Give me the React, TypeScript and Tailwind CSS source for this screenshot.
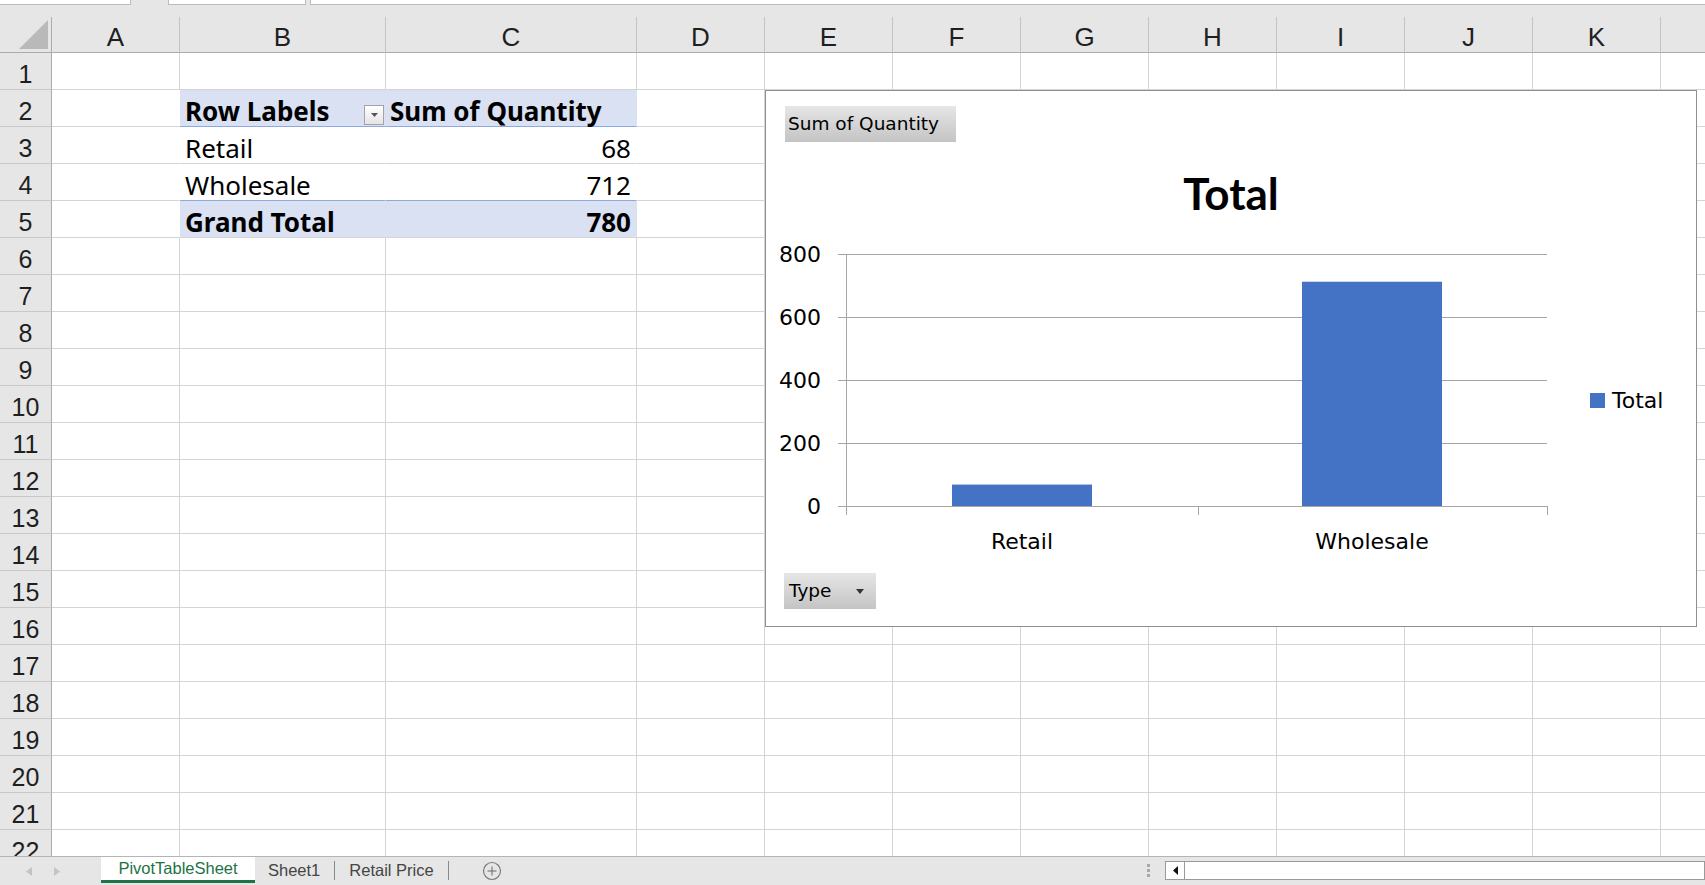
import React from 'react';

type Col = { l: string; w: string };
const COLS: Col[] = [
  { l: 'A', w: 'w-[128px]' },
  { l: 'B', w: 'w-[206px]' },
  { l: 'C', w: 'w-[251px]' },
  { l: 'D', w: 'w-[128px]' },
  { l: 'E', w: 'w-[128px]' },
  { l: 'F', w: 'w-[128px]' },
  { l: 'G', w: 'w-[128px]' },
  { l: 'H', w: 'w-[128px]' },
  { l: 'I', w: 'w-[128px]' },
  { l: 'J', w: 'w-[128px]' },
  { l: 'K', w: 'w-[128px]' },
  { l: '', w: 'w-[128px]' },
];

const ROWS = Array.from({ length: 22 }, (_, i) => i + 1);

function TopStrip() {
  return (
    <div className="h-[17px] shrink-0 bg-[#e6e6e6] flex items-start">
      <div className="w-[131px] h-[5px] bg-white border-r border-b border-[#bdbdbd]" />
      <div className="w-[37px]" />
      <div className="w-[138px] h-[5px] bg-white border-l border-r border-b border-[#bdbdbd]" />
      <div className="w-[4px]" />
      <div className="flex-1 h-[5px] bg-white border-l border-b border-[#bdbdbd]" />
    </div>
  );
}

function HeaderRow() {
  return (
    <div className="flex h-[36px] shrink-0 bg-[#e6e6e6]">
      <div className="w-[52px] shrink-0 border-r border-b border-r-[#ababab] border-b-[#ababab] flex items-end justify-end pr-[2px] pb-[2px]">
        <svg width="30" height="30" viewBox="0 0 30 30" className="block">
          <polygon points="29,0 29,29 0,29" fill="#b9b9b9" />
        </svg>
      </div>
      {COLS.map((c, i) => (
        <div
          key={i}
          className={`${c.w} shrink-0 border-r border-b border-r-[#c4c4c4] border-b-[#ababab] flex items-end justify-center leading-[29px] text-[26px] text-[#1f1f1f] overflow-hidden`}
        >
          {c.l}
        </div>
      ))}
    </div>
  );
}

function Dropdown() {
  return (
    <div className="w-[20px] h-[20px] mr-[1px] mb-[1px] border border-[#a3a3a3] bg-linear-to-b from-white to-[#e4e4e4] flex items-center justify-center self-end">
      <svg width="7" height="4" viewBox="0 0 7 4" className="block">
        <polygon points="0,0 7,0 3.5,4" fill="#555" />
      </svg>
    </div>
  );
}

function DataCell({ row, col, w }: { row: number; col: number; w: string }) {
  const inPivot = row >= 2 && row <= 5 && col <= 2;
  const blue = (row === 2 || row === 5) && (col === 1 || col === 2);
  let right = 'border-r-[#d4d4d4]';
  if (inPivot) right = blue ? 'border-r-[#d9e1f2]' : 'border-r-white';
  let bottom = 'border-b-[#d4d4d4]';
  if ((row === 2 || row === 4) && (col === 1 || col === 2)) bottom = 'border-b-[#8ea9db]';
  const bg = blue ? 'bg-[#d9e1f2]' : 'bg-white';

  let content: React.ReactNode = null;
  let align = 'justify-start';
  if (inPivot && col === 1) {
    if (row === 2) {
      align = 'justify-between';
      content = (
        <>
          <span className="pl-[5px] font-bold">Row Labels</span>
          <Dropdown />
        </>
      );
    } else if (row === 3) content = <span className="pl-[5px]">Retail</span>;
    else if (row === 4) content = <span className="pl-[5px]">Wholesale</span>;
    else content = <span className="pl-[5px] font-bold">Grand Total</span>;
  } else if (inPivot && col === 2) {
    if (row === 2) content = <span className="pl-[4px] font-bold">Sum of Quantity</span>;
    else {
      align = 'justify-end';
      const v = row === 3 ? '68' : row === 4 ? '712' : '780';
      content = <span className={`pr-[5px] ${row === 5 ? 'font-bold' : ''}`}>{v}</span>;
    }
  }

  return (
    <div
      className={`${w} shrink-0 h-[37px] border-r border-b ${right} ${bottom} ${bg} flex items-end ${align} leading-[29px] text-[26px] text-black whitespace-nowrap font-['Noto_Sans',sans-serif]`}
    >
      {content}
    </div>
  );
}

function SheetRow({ n }: { n: number }) {
  return (
    <div className="flex h-[37px] shrink-0">
      <div className="w-[52px] shrink-0 bg-[#e6e6e6] border-r border-b border-r-[#ababab] border-b-[#c8c8c8] flex items-end justify-center leading-[29px] text-[25px] text-[#1f1f1f]">
        {n}
      </div>
      {COLS.map((c, i) => (
        <DataCell key={i} row={n} col={i} w={c.w} />
      ))}
    </div>
  );
}

function Chart() {
  const zeroY = 287;
  const topY = 35;
  const yOf = (v: number) => zeroY - (v / 800) * (zeroY - topY);
  const ticks = [0, 200, 400, 600, 800];
  const grid = '#a6a6a6';
  const font = 'DejaVu Sans, sans-serif';
  return (
    <div className="absolute left-[765px] top-[37px] w-[932px] h-[537px] border border-[#8f8f8f] bg-white flex flex-col font-['DejaVu_Sans',sans-serif] text-black">
      <div className="pl-[19px] pt-[15px]">
        <div className="h-[36px] w-[171px] bg-linear-to-b from-[#e6e6e6] to-[#c4c4c4] pl-[3px] leading-[36px] text-[18.5px] whitespace-nowrap">
          Sum of Quantity
        </div>
      </div>
      <div className="mt-[26px] h-[51px] text-center leading-[51px] text-[44px] font-bold font-['Lato',sans-serif]">
        Total
      </div>
      <svg width={930} height={354} viewBox="0 0 930 354" className="block shrink-0">
        {ticks.map((t) => (
          <line key={t} x1={72} x2={781} y1={yOf(t) + 0.5} y2={yOf(t) + 0.5} stroke={grid} strokeWidth={1} />
        ))}
        <line x1={80.5} x2={80.5} y1={35} y2={296} stroke={grid} strokeWidth={1} />
        <line x1={432.5} x2={432.5} y1={287} y2={296} stroke={grid} strokeWidth={1} />
        <line x1={781.5} x2={781.5} y1={287} y2={296} stroke={grid} strokeWidth={1} />
        <rect x={186} y={yOf(68)} width={140} height={zeroY - yOf(68)} fill="#4472c4" />
        <rect x={536} y={yOf(712)} width={140} height={zeroY - yOf(712)} fill="#4472c4" />
        {ticks.map((t) => (
          <text key={t} x={55} y={yOf(t) + 8} textAnchor="end" fontFamily={font} fontSize={22} fill="#000">
            {t}
          </text>
        ))}
        <text x={256} y={330} textAnchor="middle" fontFamily={font} fontSize={22} fill="#000">
          Retail
        </text>
        <text x={606} y={330} textAnchor="middle" fontFamily={font} fontSize={22} fill="#000">
          Wholesale
        </text>
        <rect x={824} y={174} width={15} height={15} fill="#4472c4" />
        <text x={846} y={189} fontFamily={font} fontSize={22} fill="#000">
          Total
        </text>
      </svg>
      <div className="pl-[18px]">
        <div className="h-[36px] w-[92px] bg-linear-to-b from-[#e6e6e6] to-[#c4c4c4] flex items-center justify-between pl-[5px] pr-[12px] text-[18.5px]">
          <span>Type</span>
          <svg width="8" height="5" viewBox="0 0 8 5" className="block">
            <polygon points="0,0 8,0 4,5" fill="#333" />
          </svg>
        </div>
      </div>
    </div>
  );
}

function TabBar() {
  return (
    <div className="h-[29px] shrink-0 bg-[#e6e6e6] border-t border-t-[#b4b4b4] flex items-start text-[16.5px] font-['Liberation_Sans',sans-serif] whitespace-nowrap">
      <div className="w-[101px] h-[28px] flex items-center pl-[26px] gap-[22px]">
        <svg width="6" height="9" viewBox="0 0 6 9" className="block">
          <polygon points="6,0 6,9 0,4.5" fill="#c4c4c4" />
        </svg>
        <svg width="6" height="9" viewBox="0 0 6 9" className="block">
          <polygon points="0,0 0,9 6,4.5" fill="#c4c4c4" />
        </svg>
      </div>
      <div className="w-[154px] h-[26px] bg-white border-b-[3px] border-b-[#217346] flex items-center justify-center text-[#217346]">
        PivotTableSheet
      </div>
      <div className="h-[27px] flex items-center pl-[13px] pr-[14px] text-[#444]">Sheet1</div>
      <div className="w-px h-[19px] mt-[4px] bg-[#8a8a8a]" />
      <div className="h-[27px] flex items-center pl-[14px] pr-[14px] text-[#444]">Retail Price</div>
      <div className="w-px h-[19px] mt-[4px] bg-[#8a8a8a]" />
      <div className="h-[27px] flex items-center pl-[33px]">
        <svg width="20" height="20" viewBox="0 0 20 20" className="block">
          <circle cx="10" cy="10" r="8.5" fill="none" stroke="#7a7a7a" strokeWidth="1.2" />
          <line x1="5.5" x2="14.5" y1="10" y2="10" stroke="#7a7a7a" strokeWidth="1.2" />
          <line x1="10" x2="10" y1="5.5" y2="14.5" stroke="#7a7a7a" strokeWidth="1.2" />
        </svg>
      </div>
      <div className="flex-1" />
      <div className="h-[27px] flex flex-col justify-center gap-[2px] mr-[15px]">
        <div className="w-[3px] h-[3px] bg-[#a8a8a8]" />
        <div className="w-[3px] h-[3px] bg-[#a8a8a8]" />
        <div className="w-[3px] h-[3px] bg-[#a8a8a8]" />
      </div>
      <div className="w-[540px] h-[19px] mt-[4px] bg-white border border-[#9a9a9a] flex">
        <div className="w-[19px] h-full border-r border-r-[#9a9a9a] flex items-center justify-center">
          <svg width="5" height="9" viewBox="0 0 5 9" className="block">
            <polygon points="5,0 5,9 0,4.5" fill="#111" />
          </svg>
        </div>
      </div>
    </div>
  );
}

export default function App() {
  return (
    <div className="w-[1705px] h-[885px] overflow-hidden bg-white flex flex-col font-['Liberation_Sans',Arial,sans-serif]">
      <TopStrip />
      <HeaderRow />
      <div className="relative h-[803px] shrink-0 overflow-hidden flex flex-col">
        {ROWS.map((n) => (
          <SheetRow key={n} n={n} />
        ))}
        <Chart />
      </div>
      <TabBar />
    </div>
  );
}
